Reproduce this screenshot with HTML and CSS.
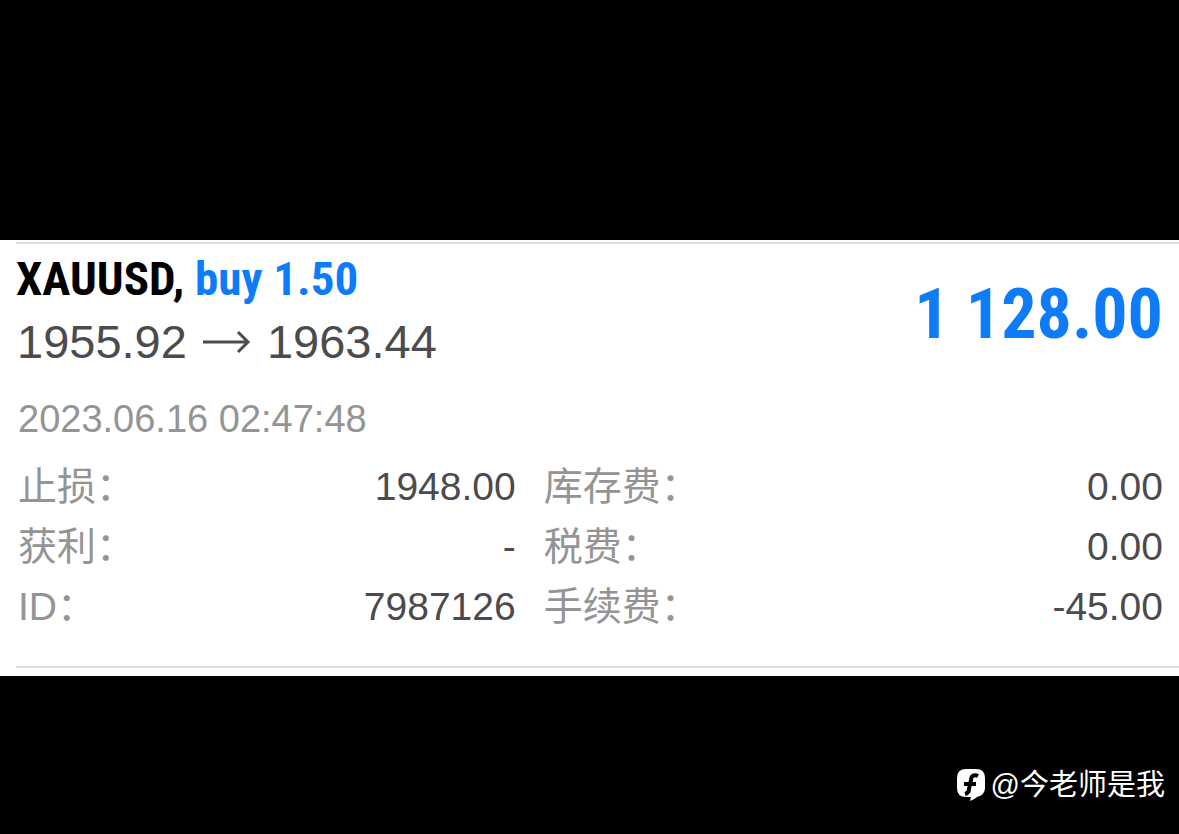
FILE: index.html
```html
<!DOCTYPE html>
<html lang="zh-CN">
<head>
  <meta charset="UTF-8">
  <meta name="viewport" content="width=device-width, initial-scale=1.0">
  <title>XAUUSD</title>
  <link rel="stylesheet" href="styles.css">
</head>
<body>
  <main class="deal">
    <div class="deal-row">
      <div class="summary">
        <div>
          <h1 class="symbol">XAUUSD, <span class="side">buy 1.50</span></h1>
          <p class="prices">
            1955.92
            <svg class="arrow" viewBox="0 0 48 26" aria-hidden="true">
              <path d="M0 13H45M35 3L45 13L35 23"/>
            </svg>
            1963.44
          </p>
        </div>
        <strong class="profit">1 128.00</strong>
      </div>
      <time class="time" datetime="2023-06-16T02:47:48">2023.06.16 02:47:48</time>
      <table class="details">
        <colgroup>
          <col class="col-label">
          <col class="col-value">
          <col class="col-label">
          <col>
        </colgroup>
        <tr>
          <th scope="row">止损：</th>
          <td>1948.00</td>
          <th scope="row">库存费：</th>
          <td>0.00</td>
        </tr>
        <tr>
          <th scope="row">获利：</th>
          <td>-</td>
          <th scope="row">税费：</th>
          <td>0.00</td>
        </tr>
        <tr>
          <th scope="row">ID：</th>
          <td>7987126</td>
          <th scope="row">手续费：</th>
          <td>-45.00</td>
        </tr>
      </table>
    </div>
  </main>
  <footer class="author">
    <svg class="logo" viewBox="0 0 28 32" aria-hidden="true">
      <path class="logo-shape" d="M9 0H19Q28 0 28 9V19Q28 26 20 28Q18 30 13 32L14 28H9Q0 28 0 19V9Q0 0 9 0Z"/>
      <path class="logo-mark" d="M21 7C17 5 14 7 14 11L12 20Q12 24 8 25M7 15H19"/>
    </svg>
    <span>@今老师是我</span>
  </footer>
</body>
</html>
```

FILE: styles.css
```css
* {
  box-sizing: border-box;
}
body {
  margin: 0;
  min-height: 100vh;
  display: flex;
  flex-direction: column;
  background: #000;
  font-family: "Liberation Sans", "Noto Sans CJK SC", sans-serif;
}
.deal {
  margin-top: 240px;
  padding: 2px 0 8px 16px;
  background: #fff;
}
.deal-row {
  padding-bottom: 29px;
  border-top: 2px solid #dedede;
  border-bottom: 2px solid #dedede;
}
.summary {
  display: flex;
  justify-content: space-between;
  align-items: center;
  padding-right: 16px;
}
.symbol,
.profit {
  font-family: "Roboto Condensed", "Liberation Sans Narrow", sans-serif;
  font-weight: 700;
}
.symbol {
  margin: 0;
  padding-top: 5px;
  font-size: 47px;
  line-height: 60px;
}
.side,
.profit {
  color: #0e7cf8;
}
.prices {
  display: flex;
  align-items: center;
  gap: 16px;
  margin: 0;
  padding-left: 1px;
  font-size: 47px;
  line-height: 66px;
  color: #4b4b4e;
}
.arrow {
  width: 48px;
  height: 26px;
  fill: none;
  stroke: #4b4b4e;
  stroke-width: 3;
}
.profit {
  padding-top: 8px;
  font-size: 70px;
  line-height: 80px;
}
.time {
  display: block;
  padding: 14px 0 8px 2px;
  font-size: 38px;
  line-height: 60px;
  color: #949494;
}
.details {
  width: 100%;
  table-layout: fixed;
  border-collapse: collapse;
  font-size: 39px;
  line-height: 60px;
}
.col-label {
  width: 18%;
}
.col-value {
  width: 26%;
}
.details th {
  padding: 0 0 0 2px;
  text-align: left;
  font-weight: 400;
  color: #949494;
}
.details td + th {
  padding-left: 16px;
}
.details td {
  padding: 0 12px 0 0;
  text-align: right;
  color: #4b4b4e;
}
.details td:last-child {
  padding-right: 16px;
}
.author {
  display: flex;
  justify-content: flex-end;
  align-items: center;
  gap: 6px;
  margin-top: auto;
  padding: 0 14px 27px;
  font-size: 29px;
  line-height: 44px;
  color: #fff;
}
.logo {
  width: 28px;
  height: 32px;
}
.logo-shape {
  fill: #fff;
}
.logo-mark {
  fill: none;
  stroke: #000;
  stroke-width: 4;
}
```
